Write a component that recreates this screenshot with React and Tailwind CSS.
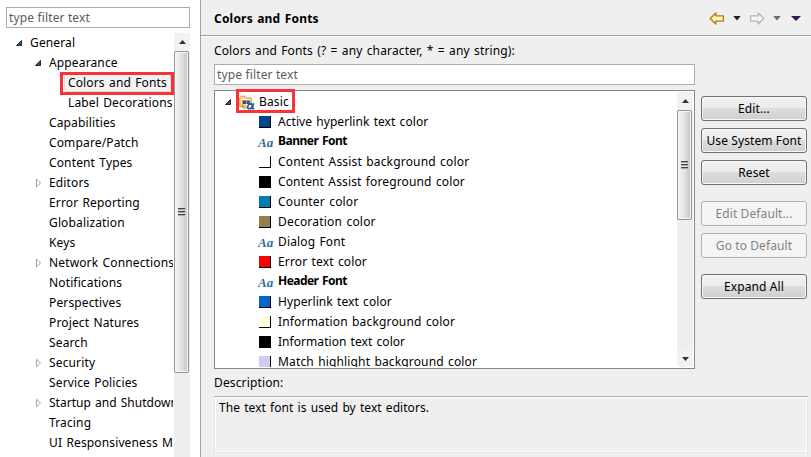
import React from "react";

const tree = [
  ["General", 0, "open"],
  ["Appearance", 1, "open"],
  ["Colors and Fonts", 2, "", true],
  ["Label Decorations", 2, ""],
  ["Capabilities", 1, ""],
  ["Compare/Patch", 1, ""],
  ["Content Types", 1, ""],
  ["Editors", 1, "closed"],
  ["Error Reporting", 1, ""],
  ["Globalization", 1, ""],
  ["Keys", 1, ""],
  ["Network Connections", 1, "closed"],
  ["Notifications", 1, ""],
  ["Perspectives", 1, ""],
  ["Project Natures", 1, ""],
  ["Search", 1, ""],
  ["Security", 1, "closed"],
  ["Service Policies", 1, ""],
  ["Startup and Shutdown", 1, "closed", false, "tracking-[0.02px]"],
  ["Tracing", 1, ""],
  ["UI Responsiveness Monitoring", 1, ""],
];

const indents = ["pl-[9px]", "pl-[28px]", "pl-[47px]"];

const entries = [
  ["Active hyperlink text color", "bg-[#00468c]", "tracking-[0.06px]"],
  ["Banner Font", "", "-mt-px font-bold tracking-[-0.5px]"],
  ["Content Assist background color", "bg-white", "tracking-[0.17px]"],
  ["Content Assist foreground color", "bg-black", "tracking-[0.14px]"],
  ["Counter color", "bg-[#007fae]", "tracking-[0.17px]"],
  ["Decoration color", "bg-[#937f4b]", "tracking-[0.2px]"],
  ["Dialog Font", "", "tracking-[0.14px]"],
  ["Error text color", "bg-[#ff0000]", "tracking-[0.14px]"],
  ["Header Font", "", "-mt-px font-bold tracking-[-0.55px]"],
  ["Hyperlink text color", "bg-[#0066cc]", "tracking-[0.08px]"],
  ["Information background color", "bg-[#ffffe1]", "tracking-[0.17px]"],
  ["Information text color", "bg-black", "tracking-[0.05px]"],
  ["Match highlight background color", "bg-[#cecbf6]", "tracking-[0.15px]"],
];

function Twisty({ state }) {
  return (
    <svg width="8" height="10" viewBox="0 0 8 10" className="shrink-0">
      {state === "open" && <path d="M6.5 2.5v5h-5z" fill="#505050" stroke="#262626" />}
      {state === "closed" && <path d="M2.5 1.2v7.6L6.6 5z" fill="#fff" stroke="#a5a5a5" />}
    </svg>
  );
}

function Grip() {
  return (
    <div className="flex w-[7px] flex-col gap-px">
      <div className="h-[2px] border-t border-[#444] bg-[#aaa]" />
      <div className="h-[2px] border-t border-[#444] bg-[#aaa]" />
      <div className="h-[2px] border-t border-[#444] bg-[#aaa]" />
    </div>
  );
}

function ScrollBar({ thumb, down }) {
  return (
    <div className="flex w-4 shrink-0 flex-col bg-[#eeeeee]">
      <div className="flex h-[18px] shrink-0 items-center justify-center bg-[#f2f2f2]">
        <svg width="7" height="4" viewBox="0 0 7 4"><path d="M3.5 0L7 4H0z" fill="#333" /></svg>
      </div>
      <div className={"flex w-[15px] shrink-0 items-center justify-center rounded-[2px] border border-[#959595] bg-gradient-to-r from-[#f6f6f6] via-[#e2e2e4] to-[#c3c4c8] shadow-[inset_0_0_0_1px_#f6f6f6] " + thumb}>
        <Grip />
      </div>
      {down && (
        <div className="mt-auto flex h-[17px] shrink-0 items-center justify-center bg-[#f2f2f2]">
          <svg width="7" height="4" viewBox="0 0 7 4"><path d="M0 0h7L3.5 4z" fill="#333" /></svg>
        </div>
      )}
    </div>
  );
}

function FontIcon() {
  return (
    <span className="mt-1 block w-4 font-['Liberation_Serif',serif] text-[13px] font-bold italic leading-[14px] tracking-normal text-[#2f6b9f]">
      Aa
    </span>
  );
}

function FolderIcon() {
  return (
    <svg width="16" height="16" viewBox="0 0 16 16" className="shrink-0">
      <path d="M.7 12.5V4l1.3-1.8h4L7.3 4h5v8.5z" fill="#f4d797" stroke="#c99a5c" />
      <path d="M1.2 5.5h10.6" stroke="#fff0c8" />
      <path d="M3.5 6.5h7v7.5h-7z" fill="#fff" stroke="#6b6250" strokeWidth=".6" />
      <path d="M4 7h3v3H4z" fill="#494949" />
      <path d="M7.5 7h3v3h-3z" fill="#2d4c9c" />
      <path d="M4 10.5h3v3H4z" fill="#f2bd1d" />
      <ellipse cx="11" cy="12.3" rx="2.7" ry="2" fill="#fff" stroke="#20629b" strokeWidth="1.7" transform="rotate(-50 11 12.3)" />
      <path d="M14.6 9.2l-1.5 5q.6 1 2-.2" fill="none" stroke="#20629b" strokeWidth="1.7" />
    </svg>
  );
}

function Button({ children, disabled, gap = "" }) {
  const look = disabled
    ? "border-[#adb2b5] bg-[#f4f4f4] text-[#838383]"
    : "border-[#707070] bg-[linear-gradient(#f2f2f2_0%,#ebebeb_48%,#dddddd_50%,#cfcfcf_100%)] shadow-[inset_0_0_0_1px_#f8f8f8]";
  return (
    <button className={"flex h-[25px] w-[106px] shrink-0 items-center justify-center whitespace-nowrap rounded-[3px] border tracking-[0.1px] " + look + " " + gap}>
      {children}
    </button>
  );
}

function Caret({ color }) {
  return <svg width="8" height="5" viewBox="0 0 8 5" className="shrink-0"><path d="M.3 0h7.4L4 4.4z" fill={color} /></svg>;
}

function Arrow({ stroke, fill, flip }) {
  return (
    <svg width="16" height="13" viewBox="0 0 16 13" className={flip ? "shrink-0 -scale-x-100" : "shrink-0"}>
      <path d="M1.2 6.5L6.8 1v2.9h7.6v5.2H6.8V12z" fill={fill} stroke={stroke} strokeWidth="1.3" strokeLinejoin="round" />
    </svg>
  );
}

export default function App() {
  return (
    <div className="flex h-[457px] w-[811px] overflow-hidden bg-[#efefef] font-['Noto_Sans','Open_Sans',sans-serif] text-[12px] leading-5 tracking-[0.14px] text-black [word-spacing:1px]">
      <aside className="flex w-[201px] shrink-0 flex-col border-r border-[#a0a0a0] bg-white pl-[6px] pt-[7px]">
        <div className="flex h-[21px] w-[184px] shrink-0 items-center border border-[#abadb3] pl-[2px] text-[#5c5c5c] [word-spacing:0]">type filter text</div>
        <div className="mt-[5px] flex h-[424px] w-[184px]">
          <div className="w-[168px] shrink-0 overflow-hidden">
            {tree.map(([label, level, state, selected, spacing = ""]) => (
              <div key={label} className={"flex h-5 items-center whitespace-nowrap " + indents[level] + (selected ? "" : " mr-px overflow-hidden")}>
                <Twisty state={state} />
                {selected ? (
                  <span className="relative ml-[7px]">
                    <span className="absolute -left-1 top-0 h-[19px] w-[107px] rounded-[2px] border border-[#dedede] bg-[#f3f3f3]" />
                    <span className="relative">{label}</span>
                    <span className="absolute -left-2 -top-px h-[23px] w-[114px] border-[3px] border-[#fb3138]" />
                  </span>
                ) : (
                  <span className={"ml-[7px] " + spacing}>{label}</span>
                )}
              </div>
            ))}
          </div>
          <ScrollBar thumb="h-[322px]" />
        </div>
      </aside>

      <main className="flex min-w-0 grow flex-col">
        <header className="flex h-[37px] shrink-0 items-center justify-between border-b border-white pl-[13px] pr-[10px] shadow-[inset_0_-1px_0_#a0a0a0]">
          <h1 className="pt-[2px] font-bold tracking-[0.2px]">Colors and Fonts</h1>
          <div className="flex items-center">
            <Arrow stroke="#b7780f" fill="#fff3b5" />
            <span className="ml-2 flex"><Caret color="#222" /></span>
            <span className="ml-2 flex"><Arrow stroke="#b5b5b5" fill="#f6f6f6" flip /></span>
            <span className="ml-2 flex"><Caret color="#6b6b70" /></span>
            <svg width="10" height="5" viewBox="0 0 10 5" className="ml-[10px] shrink-0">
              <path d="M0 0h10L5 5z" fill="#35144f" />
            </svg>
          </div>
        </header>

        <div className="mt-1 h-5 shrink-0 pl-[13px] tracking-[0.14px]">Colors and Fonts (? = any character, * = any string):</div>

        <div className="mt-[3px] flex shrink-0 pl-[13px]">
          <div className="w-[481px] shrink-0">
            <div className="flex h-[21px] items-center border border-[#abadb3] bg-white pl-[2px] text-[#5c5c5c] [word-spacing:0]">type filter text</div>
            <div className="mt-[5px] flex h-[279px] border border-[#828790] bg-white p-px">
              <div className="flex min-w-0 grow flex-col">
                <div className="flex h-5 shrink-0 items-center pl-2">
                  <Twisty state="open" />
                  <span className="relative ml-[7px] flex items-center">
                    <FolderIcon />
                    <span className="ml-1">Basic</span>
                    <span className="absolute -left-[3px] -top-[3px] h-6 w-[59px] border-[3px] border-[#fb3138]" />
                  </span>
                </div>
                <div className="min-h-0 grow overflow-hidden">
                  {entries.map(([label, color, text]) => (
                    <div key={label} className="flex h-5 whitespace-nowrap pl-[42px]">
                      <div className="w-5 shrink-0">
                        {color ? (
                          <div className={"ml-px mt-1 h-3 w-3 border-b border-r border-black " + color} />
                        ) : (
                          <FontIcon />
                        )}
                      </div>
                      <span className={text}>{label}</span>
                    </div>
                  ))}
                </div>
              </div>
              <ScrollBar thumb="h-[110px]" down />
            </div>
          </div>
          <div className="ml-[6px] flex flex-col gap-[7px] pt-8">
            <Button>Edit...</Button>
            <Button>Use System Font</Button>
            <Button>Reset</Button>
            <Button disabled gap="mt-[9px]">Edit Default...</Button>
            <Button disabled>Go to Default</Button>
            <Button gap="mt-[9px]">Expand All</Button>
          </div>
        </div>

        <div className="mt-1 h-5 shrink-0 pl-[13px]">Description:</div>
        <div className="ml-[13px] mt-[3px] h-[57px] w-[594px] shrink-0 border border-[#e2e3ea] border-t-[#abadb3] pl-1 pt-[1px] tracking-[0.05px] shadow-[inset_0_0_0_1px_#fff]">
          The text font is used by text editors.
        </div>
      </main>
    </div>
  );
}
